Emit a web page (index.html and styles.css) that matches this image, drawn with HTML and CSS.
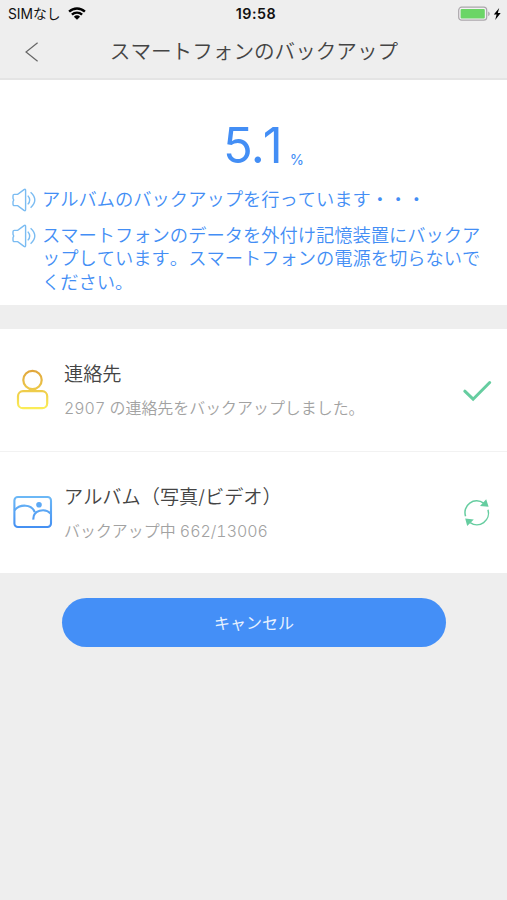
FILE: index.html
```html
<!DOCTYPE html>
<html lang="ja">
<head>
<meta charset="UTF-8">
<meta name="viewport" content="width=device-width, initial-scale=1.0">
<title>スマートフォンのバックアップ</title>
<link rel="stylesheet" href="styles.css">
</head>
<body>

<header class="header">
  <div class="status-bar">
    <div class="carrier">
      <span>SIMなし</span>
      <svg class="wifi" width="18" height="13" viewBox="0 0 18 13">
        <g fill="none" stroke="#000" stroke-width="2.4">
          <path d="M1.1 4.7a11.4 11.4 0 0 1 15.8 0"/>
          <path d="M3.9 7.7a7.4 7.4 0 0 1 10.2 0"/>
        </g>
        <path d="M9 12.7L5.9 9.7a4.5 4.5 0 0 1 6.2 0z"/>
      </svg>
    </div>
    <div class="clock">19:58</div>
    <div class="power">
      <svg width="47" height="16" viewBox="0 0 47 16">
        <rect x=".7" y="1.2" width="28" height="13" rx="3" fill="#f5f1f5" stroke="#aaa6aa" stroke-width="1.2"/>
        <rect x="2.6" y="3" width="24.2" height="9.4" rx="1" fill="#6bd566"/>
        <path d="M30.2 5.4c2 .8 2 3.8 0 4.6z" fill="#aaa6aa"/>
        <path d="M41.2 2l-5.4 6.6h2.8L37.2 14l5.5-7h-2.9z"/>
      </svg>
    </div>
  </div>
  <div class="nav">
    <button class="back" aria-label="戻る">
      <svg width="14" height="20" viewBox="0 0 14 20" fill="none" stroke="#666" stroke-width="1.2">
        <path d="M12.6.7L1 10l11.6 9.3"/>
      </svg>
    </button>
    <h1>スマートフォンのバックアップ</h1>
  </div>
</header>

<section class="summary">
  <div class="percent"><span class="value">5.1</span><span class="unit">%</span></div>
  <div class="notice">
    <svg class="speaker" width="25" height="24" viewBox="0 0 25 24">
      <path d="M2.3 6.4h3.4L12 1.6q1.6-.9 1.6.8v19.2q0 1.7-1.6.8L5.7 17.6H2.3Q1 17.6 1 16.2v-2.4q1.4-1.8 0-3.6V7.8Q1 6.4 2.3 6.4z"/>
      <path d="M15.8 7.6q3.8 4.4 0 8.8M18.6 4.3q8.4 7.7 0 15.4"/>
    </svg>
    <p>アルバムのバックアップを行っています・・・</p>
  </div>
  <div class="notice">
    <svg class="speaker" width="25" height="24" viewBox="0 0 25 24">
      <path d="M2.3 6.4h3.4L12 1.6q1.6-.9 1.6.8v19.2q0 1.7-1.6.8L5.7 17.6H2.3Q1 17.6 1 16.2v-2.4q1.4-1.8 0-3.6V7.8Q1 6.4 2.3 6.4z"/>
      <path d="M15.8 7.6q3.8 4.4 0 8.8M18.6 4.3q8.4 7.7 0 15.4"/>
    </svg>
    <p>スマートフォンのデータを外付け記憶装置にバックア<br>ップしています。スマートフォンの電源を切らないで<br>ください。</p>
  </div>
</section>

<section class="list">
  <div class="item">
    <svg class="item-icon" width="40" height="42" viewBox="0 0 40 42">
      <defs>
        <linearGradient id="gold" gradientUnits="userSpaceOnUse" x1="0" y1="1" x2="0" y2="40">
          <stop offset="0" stop-color="#e0a53c"/>
          <stop offset="1" stop-color="#fbee58"/>
        </linearGradient>
      </defs>
      <g fill="none" stroke="url(#gold)" stroke-width="2.2">
        <circle cx="19.5" cy="11" r="9.2"/>
        <rect x="5" y="22.2" width="29.2" height="17" rx="5"/>
      </g>
    </svg>
    <div class="item-text">
      <h2>連絡先</h2>
      <p>2907 の連絡先をバックアップしました。</p>
    </div>
    <svg class="item-state" width="30" height="30" viewBox="0 0 30 30" fill="none" stroke="#66cda0" stroke-width="3" stroke-linecap="round">
      <path d="M2.8 16.2l8.3 8L27.7 7.5"/>
    </svg>
  </div>
  <div class="item">
    <svg class="item-icon" width="40" height="42" viewBox="0 0 40 42">
      <defs>
        <linearGradient id="sky" gradientUnits="userSpaceOnUse" x1="0" y1="5" x2="0" y2="37">
          <stop offset="0" stop-color="#6cb8f6"/>
          <stop offset="1" stop-color="#438ef2"/>
        </linearGradient>
      </defs>
      <g fill="none" stroke="url(#sky)" stroke-width="2.1">
        <rect x="1.4" y="5" width="36.6" height="30" rx="3.5"/>
        <path d="M1.4 18.4C7 11.6 19 12 21.7 20.2M20.4 27.6c-.8-9.6 11.6-12 17.6-5.8"/>
      </g>
      <circle cx="26" cy="12.8" r="2.8" fill="#5da9f5"/>
    </svg>
    <div class="item-text">
      <h2>アルバム（写真/ビデオ）</h2>
      <p>バックアップ中 662/13006</p>
    </div>
    <svg class="item-state" width="30" height="30" viewBox="0 0 30 30">
      <g fill="none" stroke="#66cda0" stroke-width="1.5">
        <path d="M3.6 18.2A11.6 11.6 0 0 1 21.6 5.2"/>
        <path d="M26 11.8A11.6 11.6 0 0 1 8.2 24.6"/>
      </g>
      <path d="M24.2 1.2l2.4 7.6-8.6-.9zM5.2 28L3.2 20.6l8.6.9z" fill="#66cda0"/>
    </svg>
  </div>
</section>

<button class="cancel">キャンセル</button>

</body>
</html>
```

FILE: styles.css
```css
* { box-sizing: border-box; }
body { margin: 0; min-height: 100vh; background-color: #eee; color: #444; font-family: Inter, "Noto Sans CJK JP", sans-serif; font-kerning: none; text-spacing-trim: space-all; }
h1, h2, p { margin: 0; font-weight: 350; white-space: nowrap; }
svg { display: block; flex-shrink: 0; }
button { border: none; padding: 0; font-family: inherit; cursor: pointer; }

.header { height: 80px; border-bottom: 2px solid #e4e4e4; }
.status-bar { display: grid; grid-template-columns: 1fr auto 1fr; align-items: center; height: 27px; padding: 0 2px 0 8px; color: #111; }
.carrier { display: flex; align-items: center; gap: 7px; font-size: 13.8px; line-height: 16px; }
.wifi { margin-top: -1px; }
.clock { margin-right: 1px; font-size: 14.3px; font-weight: 600; letter-spacing: 0.5px; }
.power { display: flex; justify-content: flex-end; }
.nav { display: grid; grid-template-columns: 60px 1fr 60px; align-items: center; height: 50px; padding-left: 1px; }
.back { display: flex; padding-left: 24px; background: none; }
.nav h1 { font-size: 20.6px; line-height: 30px; text-align: center; }

.summary { height: 225px; padding: 37px 11px 0 12px; background-color: #fff; color: #438ef5; }
.percent { display: flex; align-items: baseline; justify-content: center; height: 71px; padding-left: 19px; line-height: 58px; }
.percent .value { font-size: 49px; letter-spacing: -2px; }
.percent .unit { margin-left: 9px; font-size: 14.5px; line-height: 20px; transform: translateY(2px); }
.notice { display: flex; gap: 5px; margin-bottom: 12px; }
.notice p { font-size: 18.27px; line-height: 23.3px; }
.speaker { fill: none; stroke: #7bbcf2; stroke-width: 1.4; }

.list { margin-top: 24px; background-color: #fff; }
.item { display: flex; align-items: center; height: 122px; padding: 0 15px 0 13px; }
.item + .item { border-top: 1px solid #f2f2f2; }
.item-text { flex: 1; margin: 3px 0 0 11px; }
.item-text h2 { font-size: 19.2px; line-height: 34px; }
.item-text p { color: #a2a2a2; font-size: 15.95px; line-height: 35px; font-variant-numeric: tabular-nums; }

.cancel { display: block; width: 384px; height: 49px; margin: 25px auto 0 62px; padding-bottom: 2px; border-radius: 25px; background-color: #448ff7; color: #e8f2ff; font-size: 16px; }
```
